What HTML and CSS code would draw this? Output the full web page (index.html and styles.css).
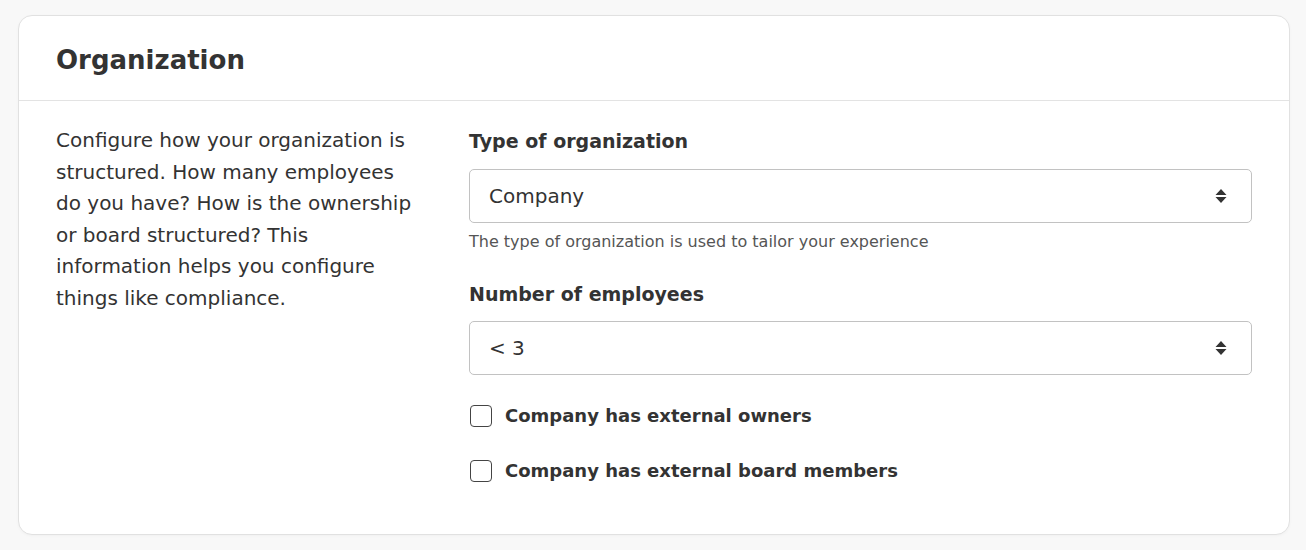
FILE: index.html
```html
<!DOCTYPE html>
<html>
	<head>
		<meta charset="utf-8" />
		<title>Organization</title>
		<link rel="stylesheet" href="styles.css">
	</head>
	<body>
		<div class="card">
			<div class="card-head">
				<h2 class="card-title">Organization</h2>
			</div>
			<div class="card-body">
				<p class="intro">Configure how your organization is structured. How many employees do you have? How is the ownership or board structured? This information helps you configure things like compliance.</p>
				<div class="fields">
					<div class="field">
						<label class="field-label">Type of organization</label>
						<div class="select">
							<span>Company</span>
							<svg class="caret" width="12" height="16" viewBox="0 0 12 16"><path d="M6 1 L11.5 7 H0.5 Z M6 15 L11.5 9 H0.5 Z" fill="#333"/></svg>
						</div>
						<p class="hint">The type of organization is used to tailor your experience</p>
					</div>
					<div class="field">
						<label class="field-label">Number of employees</label>
						<div class="select">
							<span>&lt; 3</span>
							<svg class="caret" width="12" height="16" viewBox="0 0 12 16"><path d="M6 1 L11.5 7 H0.5 Z M6 15 L11.5 9 H0.5 Z" fill="#333"/></svg>
						</div>
					</div>
					<div class="checks">
						<label class="check"><span class="box"></span>Company has external owners</label>
						<label class="check"><span class="box"></span>Company has external board members</label>
					</div>
				</div>
			</div>
		</div>
	</body>
</html>
```

FILE: styles.css
```css
body{
	margin: 0;
	padding: 15px 16px 15px 18px;
	background: #f8f8f8;
	font-family: "DejaVu Sans", "Liberation Sans", sans-serif;
	color: #333;
}
p{
	margin: 0;
}
.card{
	background: #fff;
	border: 1px solid #e1e1e1;
	border-radius: 14px;
	box-shadow: 0 1px 3px rgba(0,0,0,0.03);
}
.card-head{
	padding: 24px 37px 0;
	height: 60px;
	border-bottom: 1px solid #e3e3e3;
}
.card-title{
	margin: 0;
	font-size: 26px;
	font-weight: bold;
	line-height: 40px;
	color: #333;
}
.card-body{
	display: grid;
	grid-template-columns: 364px 1fr;
	column-gap: 49px;
	padding: 24px 37px 47px;
}
.intro{
	font-size: 20px;
	line-height: 31.6px;
	color: #333;
}
.fields{
	display: flex;
	flex-direction: column;
}
.field{
	display: flex;
	flex-direction: column;
	margin-bottom: 24px;
}
.field-label{
	font-size: 19px;
	font-weight: bold;
	line-height: 32px;
	margin-bottom: 11px;
}
.field:first-child .field-label{
	margin-bottom: 12px;
}
.select{
	height: 52px;
	border: 1px solid #c2c2c2;
	border-radius: 5px;
	display: flex;
	align-items: center;
	justify-content: space-between;
	padding: 0 24px 0 19px;
	font-size: 20px;
}
.hint{
	margin-top: 7px;
	font-size: 16px;
	line-height: 24px;
	color: #555;
}
.checks{
	display: flex;
	flex-direction: column;
	gap: 23px;
	margin-top: 1px;
}
.check{
	display: flex;
	align-items: center;
	gap: 13px;
	font-size: 18px;
	font-weight: bold;
	line-height: 32px;
}
.box{
	width: 20px;
	height: 20px;
	border: 1px solid #444;
	border-radius: 4px;
	margin-left: 1px;
}
```
